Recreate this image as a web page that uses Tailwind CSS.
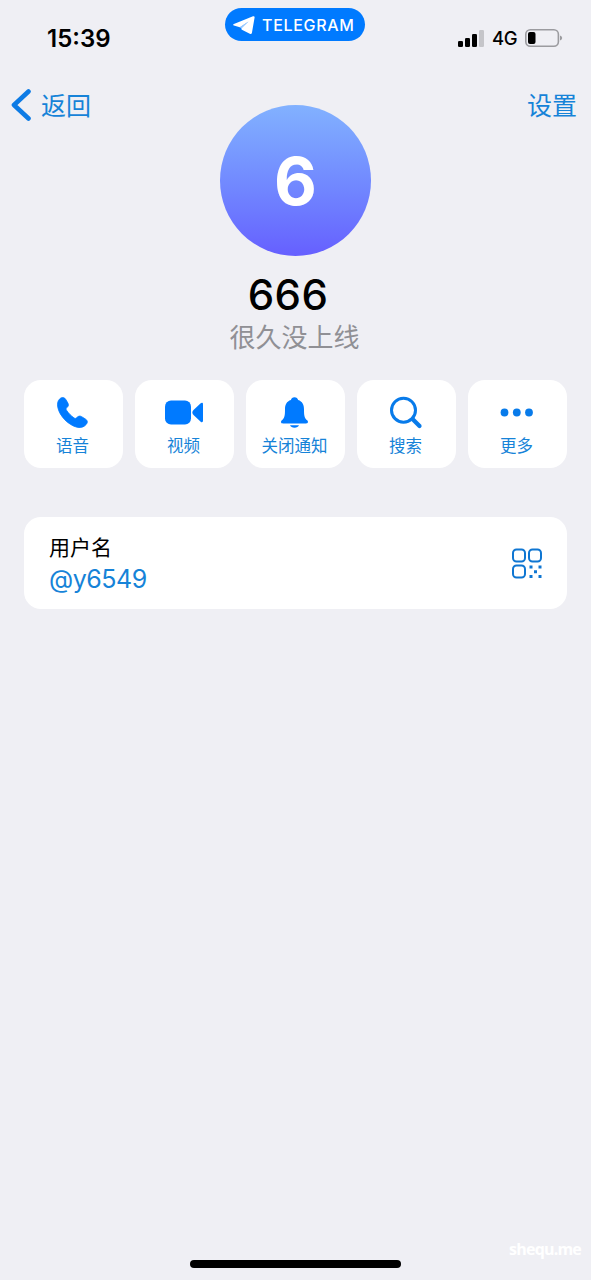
<!DOCTYPE html>
<html lang="zh-CN">
<head>
<meta charset="utf-8">
<meta name="viewport" content="width=device-width">
<title>666</title>
<script src="https://cdn.jsdelivr.net/npm/@tailwindcss/browser@4"></script>
</head>
<body class="bg-[#efeff4]">
<div class="relative flex h-[1280px] w-[591px] flex-col overflow-hidden bg-[#efeff4] font-['Inter','Noto_Sans_CJK_SC',sans-serif] text-black">
  <!-- Status bar -->
  <header class="grid h-[76px] shrink-0 grid-cols-[225px_140px_1fr] items-start">
    <div class="pt-[23px] pl-[47px] text-[24px] leading-8 font-semibold">15:39</div>
    <div class="mt-[8px] flex h-[33px] items-center rounded-full bg-[#007aff] pl-[8px] text-white">
      <svg class="h-[18px] w-[22px] shrink-0" viewBox="0 0 22 18" fill="currentColor"><path d="M20 .3.900 8c-1 .4-.9 1.300 0 1.600L6.800 11.300 15.500 5.500 8.800 12.200c-.5.5-.4 1.100.1 1.500l7.900 4c.9.5 1.900.2 2.100-.8L21.600 1.500c.2-1.200-.6-1.600-1.600-1.200Z"/><path d="M6.800 11.300 15.500 5.500 9 13Z" fill-opacity=".6"/></svg>
      <span class="ml-[7px] text-[16px] leading-none font-medium tracking-[0.7px]">TELEGRAM</span>
    </div>
    <div class="flex h-[76px] items-center pl-[93px]">
      <svg class="h-[17px] w-[26px]" viewBox="0 0 26 17"><rect x="0" y="11" width="5" height="6" rx="1.300"/><rect x="7" y="8" width="5" height="9" rx="1.300"/><rect x="14" y="4" width="5" height="13" rx="1.300"/><rect x="21" y="0" width="5" height="17" rx="1.300" fill="#c5c5c9"/></svg>
      <span class="ml-[8px] w-[26px] text-[18.500px] leading-none font-medium tracking-[-0.4px]">4G</span>
      <svg class="ml-[7px] h-[18px] w-[38px]" viewBox="0 0 38 18"><rect x=".8" y=".8" width="32.600" height="16.400" rx="4.500" fill="none" stroke="#9b9b9f" stroke-width="1.600"/><rect x="3" y="3" width="7.500" height="12" rx="2"/><path d="M35 6.500q2.200.8 2.200 2.500T35 11.500Z" fill="#9b9b9f"/></svg>
    </div>
  </header>

  <!-- Navigation and profile -->
  <section class="grid shrink-0 grid-cols-[1fr_151px_1fr] pt-[12px]">
    <a class="flex h-[34px] items-center pl-[11px] text-[25px] leading-[34px] text-[#1683d8]">
      <svg class="h-[34px] w-[20px]" viewBox="0 0 20 34" fill="none" stroke="#0d7be5" stroke-width="4.600" stroke-linecap="round" stroke-linejoin="round"><path d="M17.500 3.500 3 17l14.500 13.500"/></svg>
      <span class="ml-[10px] pt-[2px]">返回</span>
    </a>
    <div class="mt-[17px] flex size-[151px] items-center justify-center rounded-full bg-linear-to-b from-[#82b1ff] to-[#665fff] text-[66px] leading-none font-bold text-white">6</div>
    <a class="pt-px pr-[14px] text-right text-[25px] leading-[34px] text-[#1683d8]">设置</a>
  </section>
  <h1 class="mt-[15px] h-[48px] pr-[15px] text-center text-[42px] leading-[48px] font-medium tracking-[0.4px]">666</h1>
  <p class="h-[36px] pt-px pr-[2px] text-center text-[26px] leading-[36px] text-[#909095]">很久没上线</p>

  <!-- Actions -->
  <nav class="mx-[24px] mt-[25px] grid h-[88px] shrink-0 grid-cols-5 gap-[12px] text-[16.500px] text-[#1683d8]">
    <button class="flex flex-col items-center rounded-[17px] bg-white pt-[15px] pr-[2px]">
      <svg class="h-[36px] w-[36px]" viewBox="0 0 36 36" fill="#007aff" stroke="#007aff" stroke-width=".8"><path d="M4.800 3.800C7.200 1.700 9.500 2.200 11 4.800l2 3.500c1 2 .2 3.300-1.300 4.500-1 .8-.7 1.700 0 2.700 2 3 4.300 5.200 7.200 7.300 1.100.8 2 .9 2.900-.2 1.500-1.600 3-2 4.900-.9l3.700 2.300c2.300 1.400 2.500 3.300 1 5.200-2 2.500-5 4-9.200 3.100C13.500 30.200 4.500 21 2.800 12.400 2.100 8.800 2.600 5.800 4.800 3.800Z"/></svg>
      <span class="leading-[31px]">语音</span>
    </button>
    <button class="flex flex-col items-center rounded-[17px] bg-white pt-[15px] pr-[2px]">
      <svg class="ml-px h-[36px] w-[38px]" viewBox="0 0 38 36" fill="#007aff"><rect x="0" y="5.500" width="26" height="24" rx="6"/><path d="M28.500 15 35.700 8.300c1.100-1 2.300-.6 2.300.9v16.600c0 1.500-1.200 1.900-2.300.9l-7.200-6.700c-1.600-1.500-1.600-3.500 0-5Z"/></svg>
      <span class="leading-[31px]">视频</span>
    </button>
    <button class="flex flex-col items-center rounded-[17px] bg-white pt-[15px] pr-[2px]">
      <svg class="h-[36px] w-[36px]" viewBox="0 0 36 36" fill="#007aff"><path d="M17.500 2.200c-2 0-3.300 1.200-3.600 2.900C9.600 6.500 8 9.900 8 14.200c0 6.600-.4 8.700-3.100 11-1.700 1.500-.8 3.200 1 3.200h23.200c1.800 0 2.700-1.700 1-3.200-2.700-2.300-3.100-4.400-3.100-11 0-4.300-1.600-7.700-5.900-9.100C20.800 3.400 19.500 2.200 17.500 2.200Z"/><path d="M13 30.300h9c-.6 1.600-2.200 2.500-4.500 2.500s-3.900-.9-4.500-2.500Z"/></svg>
      <span class="leading-[31px]">关闭通知</span>
    </button>
    <button class="flex flex-col items-center rounded-[17px] bg-white pt-[15px] pr-[2px]">
      <svg class="h-[36px] w-[36px]" viewBox="0 0 36 36" fill="none" stroke="#087bea" stroke-linecap="round"><circle cx="15.500" cy="15.200" r="12" stroke-width="3"/><path d="m25 24.500 6.500 6.500" stroke-width="4.200"/></svg>
      <span class="leading-[31px]">搜索</span>
    </button>
    <button class="flex flex-col items-center rounded-[17px] bg-white pt-[15px] pr-[2px]">
      <svg class="h-[36px] w-[36px]" viewBox="0 0 36 36" fill="#087bea"><circle cx="5.500" cy="17.500" r="3.900"/><circle cx="17.800" cy="17.500" r="3.900"/><circle cx="30" cy="17.500" r="3.900"/></svg>
      <span class="leading-[31px]">更多</span>
    </button>
  </nav>

  <!-- Username -->
  <section class="mx-[24px] mt-[49px] flex h-[92px] shrink-0 items-center justify-between rounded-[17px] bg-white pr-[24px] pl-[25px]">
    <div>
      <div class="text-[21px] leading-[31px]">用户名</div>
      <div class="text-[25px] leading-[32px] tracking-[-0.45px] text-[#1683d8]">@y6549</div>
    </div>
    <svg class="h-[31px] w-[31px]" viewBox="0 0 31 31" fill="none" stroke="#0f76d2" stroke-width="2"><rect x="1" y="1.500" width="12" height="12" rx="3.500"/><rect x="17" y="1.500" width="12" height="12" rx="3.500"/><rect x="1" y="17.500" width="12" height="12" rx="3.500"/><path d="M17.500 19h3m6 0h3M22 23.700h3M17.500 28.500h3m6 0h3" stroke-width="3"/></svg>
  </section>

  <!-- Home indicator -->
  <footer class="mt-auto flex h-[20px] shrink-0 justify-center"><div class="h-[8px] w-[211px] rounded-full bg-black"></div></footer>
  <span class="absolute right-[10px] bottom-[20px] font-['Open_Sans',sans-serif] text-[16px] leading-[22px] font-bold tracking-[-0.8px] text-white">shequ.me</span>
</div>
</body>
</html>
